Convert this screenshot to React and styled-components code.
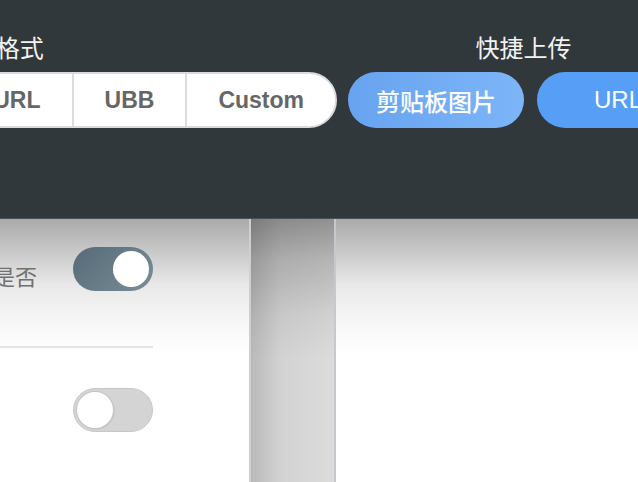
import React from 'react';
import styled, { createGlobalStyle } from 'styled-components';

const GlobalStyle = createGlobalStyle`
    html, body {
        margin: 0;
        padding: 0;
        width: 100%;
        height: 100%;
        overflow: hidden;
        background: #ffffff;
    }
    body {
        font-family: 'Liberation Sans', 'Noto Sans CJK SC', sans-serif;
    }
`;

const Page = styled.div`
    width: 638px;
    height: 482px;
    display: flex;
    flex-direction: column;
    overflow: hidden;
`;

const Header = styled.header`
    height: 218px;
    flex-shrink: 0;
    background: #30383c;
    padding-top: 31px;
    box-sizing: border-box;
    display: flex;
    align-items: flex-start;
`;

const LeftSlot = styled.div`
    width: 337px;
    flex-shrink: 0;
    display: flex;
    justify-content: flex-end;
`;

const Group = styled.div`
    display: flex;
    flex-direction: column;
    align-items: center;
    flex-shrink: 0;
    margin-left: ${(p) => p.$offset || 0}px;
`;

const GroupLabel = styled.div`
    font-family: 'Noto Sans CJK SC', sans-serif;
    font-size: 24px;
    line-height: 32px;
    color: #f2f2f2;
    margin-bottom: 9px;
    white-space: nowrap;
`;

const Segmented = styled.div`
    display: flex;
    height: 56px;
    box-sizing: border-box;
    background: #ffffff;
    border: 2px solid #d9d9de;
    border-radius: 28px;
    overflow: hidden;
`;

const Segment = styled.div`
    display: flex;
    align-items: center;
    padding: 0 31px;
    font-size: 23px;
    font-weight: 700;
    color: #666666;
    white-space: nowrap;
    & + & {
        border-left: 2px solid #dcdcdc;
    }
`;

const ButtonRow = styled.div`
    display: flex;
    gap: 13px;
`;

const QuickButton = styled.div`
    height: 56px;
    min-width: 162px;
    box-sizing: border-box;
    padding: 0 28px;
    border-radius: 28px;
    display: flex;
    align-items: center;
    justify-content: center;
    font-family: 'Liberation Sans', 'Noto Sans CJK SC', sans-serif;
    font-size: 24px;
    font-weight: 500;
    color: #ffffff;
    white-space: nowrap;
    background: ${(p) =>
        p.$light
            ? 'linear-gradient(to right, #67a3f0, #7db5f8)'
            : '#579ff6'};
`;

const Body = styled.div`
    flex: 1;
    display: flex;
    border-top: 1px solid #4a5155;
`;

const shade =
    'linear-gradient(#aaaaaa 0, #c8c8c8 32px, #e8e8e8 65px, #f6f6f6 100px, #ffffff 135px)';

const SettingsPanel = styled.section`
    width: 249px;
    flex-shrink: 0;
    box-sizing: border-box;
    padding: 28px 96px 0 0;
    background: ${shade};
    overflow: hidden;
    display: flex;
    flex-direction: column;
    align-items: flex-end;
`;

const SettingRow = styled.div`
    display: flex;
    align-items: center;
    justify-content: flex-end;
    gap: 36px;
    padding-top: ${(p) => p.$top || 0}px;
    padding-bottom: ${(p) => p.$bottom || 0}px;
`;

const SettingLabel = styled.span`
    font-family: 'Noto Sans CJK SC', sans-serif;
    font-size: 22px;
    line-height: 30px;
    padding-top: 12px;
    color: #717171;
    white-space: nowrap;
`;

const Divider = styled.div`
    width: 400px;
    height: 2px;
    flex-shrink: 0;
    background: #e3e3e3;
`;

const Toggle = styled.div`
    width: 80px;
    height: 44px;
    flex-shrink: 0;
    box-sizing: border-box;
    border-radius: 22px;
    display: flex;
    justify-content: ${(p) => (p.$on ? 'flex-end' : 'flex-start')};
    background: ${(p) =>
        p.$on ? 'linear-gradient(135deg, #566b77, #7a8d99)' : '#d4d4d4'};
    border: ${(p) => (p.$on ? 'none' : '1px solid #c8c8c8')};
    padding: ${(p) => (p.$on ? '4px' : '3px')};
`;

const Knob = styled.div`
    width: 36px;
    height: 36px;
    border-radius: 50%;
    background: #ffffff;
    box-shadow: ${(p) =>
        p.$on ? 'none' : '0 0 0 1px #c4c4c4, 1px 1px 2px rgba(0,0,0,0.12)'};
`;

const Gutter = styled.div`
    width: 87px;
    flex-shrink: 0;
    box-sizing: border-box;
    border-left: 2px solid #cfcfcf;
    border-right: 2px solid #c9c7cd;
    background:
        linear-gradient(rgba(0, 0, 0, 0.34) 0, rgba(0, 0, 0, 0.18) 40px, rgba(0, 0, 0, 0.05) 95px, rgba(0, 0, 0, 0) 140px),
        linear-gradient(to right, #b9b9b9, #d2d2d2 35%, #dcdcdc);
`;

const Preview = styled.section`
    flex: 1;
    background: ${shade};
`;

const App = () => {
    return (
        <Page>
            <GlobalStyle />
            <Header>
                <LeftSlot>
                    <Group>
                        <GroupLabel>链接格式</GroupLabel>
                        <Segmented>
                            <Segment>Markdown</Segment>
                            <Segment>HTML</Segment>
                            <Segment>URL</Segment>
                            <Segment>UBB</Segment>
                            <Segment>Custom</Segment>
                        </Segmented>
                    </Group>
                </LeftSlot>
                <Group $offset={11}>
                    <GroupLabel>快捷上传</GroupLabel>
                    <ButtonRow>
                        <QuickButton $light>剪贴板图片</QuickButton>
                        <QuickButton>URL</QuickButton>
                    </ButtonRow>
                </Group>
            </Header>
            <Body>
                <SettingsPanel>
                    <SettingRow $bottom={55}>
                        <SettingLabel>上传前询问是否</SettingLabel>
                        <Toggle $on>
                            <Knob $on />
                        </Toggle>
                    </SettingRow>
                    <Divider />
                    <SettingRow $top={40}>
                        <Toggle>
                            <Knob />
                        </Toggle>
                    </SettingRow>
                </SettingsPanel>
                <Gutter />
                <Preview />
            </Body>
        </Page>
    );
};

export default App;
